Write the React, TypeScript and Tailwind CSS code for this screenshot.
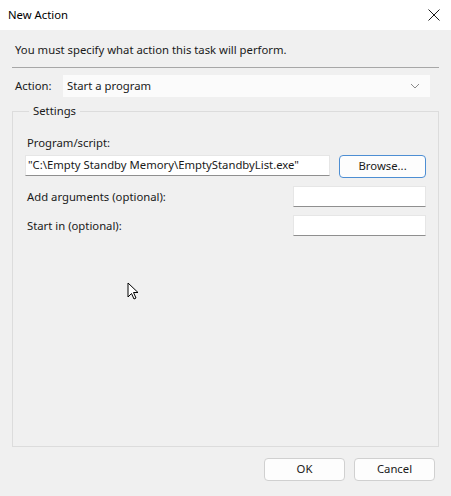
export default function App() {
  const font = { fontFamily: '"Noto Sans", "Open Sans", sans-serif' };
  return (
    <div
      className="w-[451px] h-[496px] bg-[#f0f0f0] text-[11.3px] text-[#1a1a1a] flex flex-col overflow-hidden relative"
      style={font}
    >
      {/* title bar */}
      <div className="h-[30px] bg-white flex items-center justify-between pl-[8px] pr-[9px] shrink-0">
        <span className="text-[11.3px] text-black">New Action</span>
        <svg width="14" height="14" viewBox="0 0 14 14" className="mr-[1px]">
          <path d="M1.5 1.5 L12.5 12.5 M12.5 1.5 L1.5 12.5" stroke="#1a1a1a" strokeWidth="1" />
        </svg>
      </div>

      <div className="flex flex-col flex-1 px-[12px]">
        <p className="pt-[12px] pl-[3px] leading-[16px]">You must specify what action this task will perform.</p>
        <div className="mt-[9px] h-px bg-[#a7a7a7]" />

        <div className="mt-[7px] flex items-center h-[22px]">
          <span className="w-[51px] pl-[3px]">Action:</span>
          <div className="flex-1 h-[22px] bg-[#fbfbfb] flex items-center justify-between pl-[4px] pr-[10px] mr-[9px]">
            <span>Start a program</span>
            <svg width="10" height="6" viewBox="0 0 10 6">
              <path d="M1 1 L5 5 L9 1" stroke="#8a8a8a" strokeWidth="1" fill="none" />
            </svg>
          </div>
        </div>

        <fieldset className="mt-[6px] border border-[#dcdcdc] h-[344px] pl-[12px] pr-[12px] min-w-0">
          <legend className="ml-[4px] px-[4px] leading-[16px]">Settings</legend>
          <div className="pl-[2px] pt-[16px] leading-[16px]">Program/script:</div>
          <div className="mt-[4px] flex items-start">
            <div className="w-[306px] h-[21px] bg-white border border-[#e6e6e6] border-b-[#8f8f8f] flex items-center pl-[2px] whitespace-nowrap overflow-hidden">
              "C:\Empty Standby Memory\EmptyStandbyList.exe"
            </div>
            <button className="ml-[9px] w-[87px] h-[23px] bg-[#fdfdfd] border border-[#4d8ed3] rounded-[4px] text-[11.3px] text-[#1a1a1a]">
              Browse...
            </button>
          </div>
          <div className="mt-[8px] flex items-center justify-between">
            <span className="pl-[2px] pt-[2px]">Add arguments (optional):</span>
            <div className="w-[133px] h-[21px] bg-white border border-[#e6e6e6] border-b-[#8f8f8f]" />
          </div>
          <div className="mt-[8px] flex items-center justify-between">
            <span className="pl-[2px] pt-[2px]">Start in (optional):</span>
            <div className="w-[133px] h-[21px] bg-white border border-[#e6e6e6] border-b-[#8f8f8f]" />
          </div>
        </fieldset>

        <div className="mt-[11px] flex justify-end gap-[9px] pr-[4px]">
          <button className="w-[81px] h-[23px] bg-[#fdfdfd] border border-[#d0d0d0] rounded-[4px] text-[11.3px]">OK</button>
          <button className="w-[81px] h-[23px] bg-[#fdfdfd] border border-[#d0d0d0] rounded-[4px] text-[11.3px]">Cancel</button>
        </div>
      </div>

      {/* mouse pointer */}
      <svg width="14" height="20" viewBox="0 0 14 20" className="absolute left-[127px] top-[282px]">
        <path d="M1 1 L1 15 L4.5 11.5 L7 17 L9 16 L6.5 10.5 L11 10.5 Z" fill="white" stroke="black" strokeWidth="1" strokeLinejoin="round" />
      </svg>
    </div>
  );
}
